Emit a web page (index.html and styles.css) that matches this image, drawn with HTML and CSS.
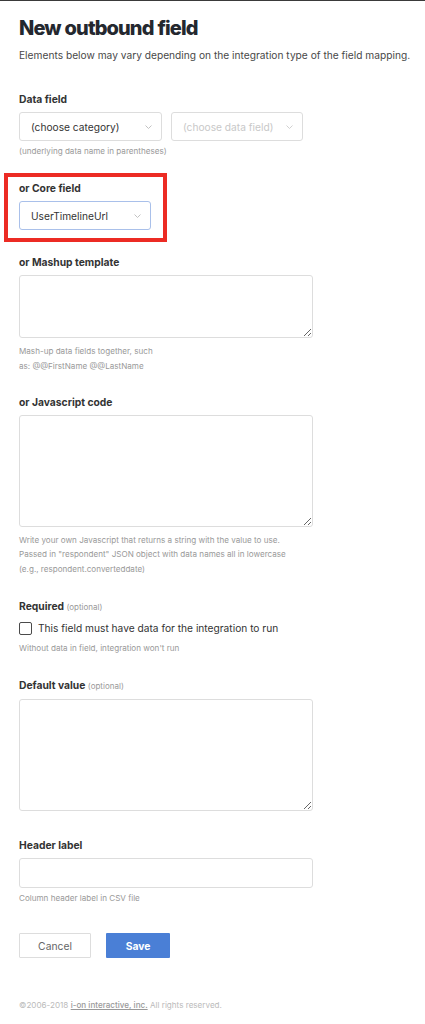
FILE: index.html
```html
<!DOCTYPE html>
<html lang="en">
<head>
    <meta charset="UTF-8">
    <meta name="viewport" content="width=device-width, initial-scale=1.0">
    <title>New outbound field</title>
    <link rel="stylesheet" href="styles.css">
</head>
<body>

    <div class="page">
        <h1 class="page-title">New outbound field</h1>
        <p class="page-intro">Elements below may vary depending on the integration type of the field mapping.</p>

        <!-- Data field -->
        <div class="field field-data">
            <label class="field-label">Data field</label>
            <div class="select-row">
                <div class="select select-category">
                    <span>(choose category)</span>
                    <svg class="chevron" width="7" height="4" viewBox="0 0 7 4"><path d="M0.5 0.5l3 3 3-3" fill="none" stroke="#bbb" stroke-width="0.9"/></svg>
                </div>
                <div class="select select-datafield disabled">
                    <span>(choose data field)</span>
                    <svg class="chevron" width="7" height="4" viewBox="0 0 7 4"><path d="M0.5 0.5l3 3 3-3" fill="none" stroke="#ccc" stroke-width="0.9"/></svg>
                </div>
            </div>
            <p class="hint hint-tight">(underlying data name in parentheses)</p>
        </div>

        <!-- Core field (highlighted) -->
        <div class="highlight">
            <label class="field-label">or Core field</label>
            <div class="select select-core focused">
                <span>UserTimelineUrl</span>
                <svg class="chevron" width="7" height="4" viewBox="0 0 7 4"><path d="M0.5 0.5l3 3 3-3" fill="none" stroke="#bbb" stroke-width="0.9"/></svg>
            </div>
        </div>

        <!-- Mashup template -->
        <div class="field field-mashup">
            <label class="field-label">or Mashup template</label>
            <textarea class="textarea textarea-short"></textarea>
            <p class="hint">Mash-up data fields together, such<br>as: @@FirstName @@LastName</p>
        </div>

        <!-- Javascript code -->
        <div class="field field-js">
            <label class="field-label">or Javascript code</label>
            <textarea class="textarea textarea-tall"></textarea>
            <p class="hint hint-lines">Write your own Javascript that returns a string with the value to use.<br>Passed in "respondent" JSON object with data names all in lowercase<br>(e.g., respondent.converteddate)</p>
        </div>

        <!-- Required -->
        <div class="field field-required">
            <label class="field-label">Required <span class="optional">(optional)</span></label>
            <label class="checkbox-row">
                <input type="checkbox" class="checkbox">
                <span>This field must have data for the integration to run</span>
            </label>
            <p class="hint hint-check">Without data in field, integration won't run</p>
        </div>

        <!-- Default value -->
        <div class="field field-default">
            <label class="field-label">Default value <span class="optional">(optional)</span></label>
            <textarea class="textarea textarea-tall"></textarea>
        </div>

        <!-- Header label -->
        <div class="field field-header">
            <label class="field-label">Header label</label>
            <input type="text" class="text-input">
            <p class="hint hint-tight">Column header label in CSV file</p>
        </div>

        <!-- Buttons -->
        <div class="actions">
            <button class="btn btn-cancel">Cancel</button>
            <button class="btn btn-save">Save</button>
        </div>

        <p class="footer">&copy;2006-2018 <a href="#">i-on interactive, inc.</a> All rights reserved.</p>
    </div>

</body>
</html>
```

FILE: styles.css
```css
/* General Page Style */
body {
    font-family: Inter, "Noto Sans", Arial, sans-serif;
    margin: 0;
    padding: 0;
    background-color: #fff;
    border-top: 1px solid #3a3a3a;
    color: #333;
}

.page {
    padding: 0 19px;
}

/* Heading */
.page-title {
    font-size: 20px;
    font-weight: 800;
    line-height: 26px;
    color: #24282f;
    margin: 14px 0 0;
    letter-spacing: -0.9px;
    word-spacing: 0.5px;
}

.page-intro {
    font-size: 10.2px;
    line-height: 16px;
    color: #484848;
    margin: 6px 0 0;
    white-space: nowrap;
}

/* Fields */
.field-label {
    display: block;
    font-size: 10.3px;
    font-weight: 700;
    line-height: 15px;
    color: #333;
    margin-bottom: 5px;
}

.optional {
    font-size: 8px;
    font-weight: 400;
    color: #999;
}

.field-data {
    margin-top: 29px;
}

.field-mashup {
    margin-top: 12.5px;
}

.field-js {
    margin-top: 21px;
}

.field-required,
.field-default {
    margin-top: 22.5px;
}

.field-header {
    margin-top: 26.5px;
}

.hint {
    font-size: 8.1px;
    line-height: 15px;
    color: #999;
    margin: 6px 0 0;
    white-space: nowrap;
}

.hint-tight {
    margin-top: 3px;
}

.hint-lines {
    line-height: 14.7px;
}

.hint-check {
    margin-top: 4.5px;
}

/* Selects */
.select-row {
    display: flex;
    gap: 9px;
}

.select {
    box-sizing: border-box;
    height: 29px;
    display: flex;
    align-items: center;
    justify-content: space-between;
    padding: 0 9px 0 11px;
    border: 1px solid #ddd;
    border-radius: 3px;
    background-color: #fff;
    font-size: 10.2px;
    color: #333;
    white-space: nowrap;
}

.select-category {
    width: 143px;
}

.select-datafield {
    width: 132px;
}

.select-core {
    width: 132px;
}

.disabled {
    color: #c8c8c8;
}

.focused {
    border-color: #a9c0ea;
}

/* Highlight box round the core field */
.highlight {
    width: fit-content;
    margin: 13.5px 0 0 -15px;
    padding: 4.5px 12px 8px 11px;
    border: 4px solid #ec2b24;
}

/* Text areas and inputs */
.textarea,
.text-input {
    display: block;
    box-sizing: border-box;
    width: 294px;
    margin: 0;
    border: 1px solid #ddd;
    border-radius: 3px;
    background-color: #fff;
    font-family: inherit;
}

.textarea-short {
    height: 63px;
}

.textarea-tall {
    height: 112px;
}

.text-input {
    height: 30px;
}

/* Checkbox */
.checkbox-row {
    display: flex;
    align-items: center;
    gap: 6px;
    margin-top: 5px;
    height: 16px;
    font-size: 10.2px;
    color: #333;
}

.checkbox {
    appearance: none;
    box-sizing: border-box;
    width: 13px;
    height: 13px;
    margin: 0;
    border: 1.3px solid #4a4a4a;
    border-radius: 2px;
    background-color: #fff;
}

/* Buttons */
.actions {
    display: flex;
    gap: 15px;
    margin-top: 27.5px;
}

.btn {
    box-sizing: border-box;
    height: 25px;
    font-family: inherit;
    font-size: 10.3px;
    border-radius: 1px;
    cursor: pointer;
}

.btn-cancel {
    width: 72px;
    background-color: #fff;
    border: 1px solid #ddd;
    color: #666;
}

.btn-save {
    width: 64px;
    background-color: #4a7fd6;
    border: none;
    color: #fff;
    font-weight: 700;
}

/* Footer */
.footer {
    font-size: 8.1px;
    line-height: 14px;
    color: #bbb;
    margin: 40px 0 0;
}

.footer a {
    color: #999;
    font-weight: 500;
}
```
